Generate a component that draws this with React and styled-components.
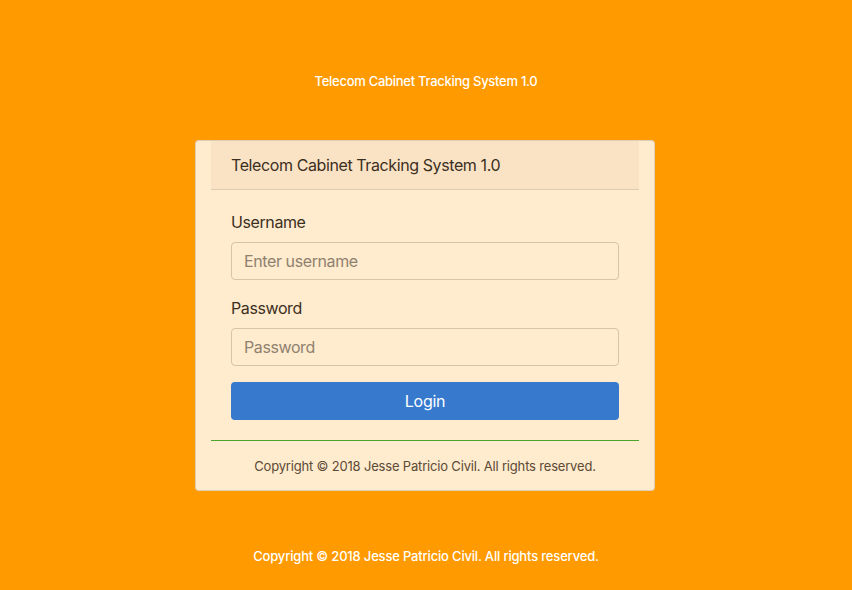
import React from 'react';
import styled, { createGlobalStyle } from 'styled-components';

const GlobalStyle = createGlobalStyle`
  html, body {
    margin: 0;
    padding: 0;
    background: #ff9a00;
    font-family: 'Inter', 'Helvetica Neue', sans-serif;
  }
  * { box-sizing: border-box; }
`

const Page = styled.div`
  min-height: 590px;
  display: flex;
  flex-direction: column;
  align-items: center;
  padding-top: 71px;
`

const PageTitle = styled.div`
  color: #fff;
  font-size: 13px;
  font-weight: 500;
  line-height: 20px;
  letter-spacing: -0.28px;
  margin-bottom: 49px;
`

const Card = styled.div`
  width: 460px;
  background: #ffebcd;
  border: 1px solid rgba(0, 0, 0, 0.12);
  border-radius: 4px;
  margin-left: -2px;
`

const CardHeader = styled.div`
  margin: 0 15px;
  padding: 12px 20px;
  background: #fae3c5;
  border-bottom: 1px solid #dfcbb0;
  color: #3c2f1f;
  font-size: 16px;
  line-height: 24px;
  letter-spacing: -0.4px;
`

const CardBody = styled.form`
  padding: 20px 35px;
`

const FormGroup = styled.div`
  margin-bottom: 16px;
`

const Label = styled.label`
  display: block;
  color: #3c2f1f;
  font-size: 16px;
  line-height: 24px;
  letter-spacing: -0.4px;
  margin-bottom: 8px;
`

const Input = styled.input`
  display: block;
  width: 100%;
  height: 38px;
  padding: 6px 12px;
  font-family: inherit;
  font-size: 16px;
  letter-spacing: -0.4px;
  color: #3c2f1f;
  background: #ffebcd;
  border: 1px solid #d6c3a8;
  border-radius: 4px;
  outline: none;

  &::placeholder {
    color: #8f8170;
  }
`

const Button = styled.button`
  display: block;
  width: 100%;
  height: 38px;
  border: none;
  border-radius: 4px;
  background: #3679cd;
  color: #fff;
  font-family: inherit;
  font-size: 16px;
  letter-spacing: -0.3px;
  cursor: pointer;
`

const CardFooter = styled.div`
  margin: 0 15px;
  border-top: 1px solid #4aa52e;
  padding: 16px 0 15px;
  text-align: center;
  color: #5b4a36;
  font-size: 13px;
  line-height: 18px;
  letter-spacing: -0.18px;
`

const PageFooter = styled.div`
  color: #fff;
  font-size: 13px;
  font-weight: 500;
  line-height: 20px;
  letter-spacing: -0.18px;
  margin-top: 55px;
`

const App = () => {
  return (
    <>
      <GlobalStyle />
      <Page>
        <PageTitle>Telecom Cabinet Tracking System 1.0</PageTitle>
        <Card>
          <CardHeader>Telecom Cabinet Tracking System 1.0</CardHeader>
          <CardBody onSubmit={e => e.preventDefault()}>
            <FormGroup>
              <Label htmlFor="username">Username</Label>
              <Input id="username" type="text" placeholder="Enter username" />
            </FormGroup>
            <FormGroup>
              <Label htmlFor="password">Password</Label>
              <Input id="password" type="password" placeholder="Password" />
            </FormGroup>
            <Button type="submit">Login</Button>
          </CardBody>
          <CardFooter>Copyright © 2018 Jesse Patricio Civil. All rights reserved.</CardFooter>
        </Card>
        <PageFooter>Copyright © 2018 Jesse Patricio Civil. All rights reserved.</PageFooter>
      </Page>
    </>
  )
}

export default App;
